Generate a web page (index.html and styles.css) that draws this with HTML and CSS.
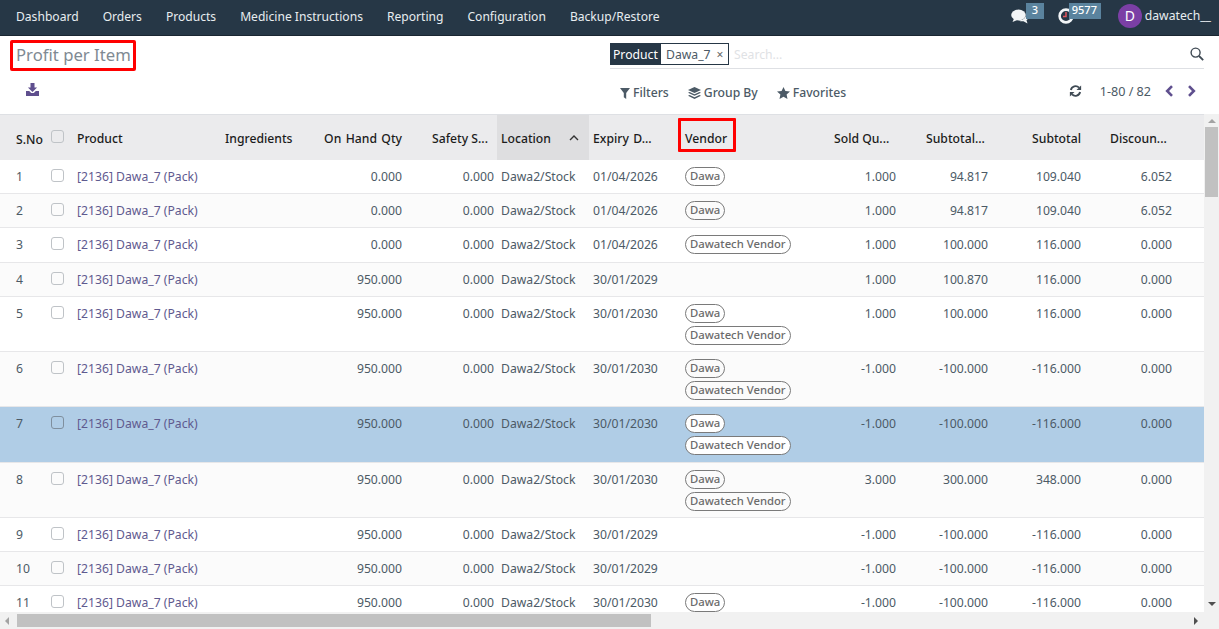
FILE: index.html
```html
<!DOCTYPE html>
<html lang="en">
<head>
<meta charset="utf-8">
<title>Profit per Item</title>
<link rel="stylesheet" href="styles.css">
</head>
<body>
<nav class="navbar">
  <ul class="menu">
    <li>Dashboard</li><li>Orders</li><li>Products</li><li>Medicine Instructions</li><li>Reporting</li><li>Configuration</li><li>Backup/Restore</li>
  </ul>
  <div class="systray">
    <div class="tray tray-chat">
      <svg class="tray-icon" width="18" height="15" viewBox="0 0 18 15"><ellipse cx="7.5" cy="6" rx="7.3" ry="5.4" fill="#f2f5f7"/><path d="M3 9.5 1.5 13 7 10.8Z" fill="#f2f5f7"/><path d="M15.2 3C17 4.5 18 6 17.6 8 17.3 9.5 16.5 10.5 15.5 11.2L16.5 14.5 12.5 12.3C10.5 12.5 8.8 12.1 7.6 11.4 12.5 11.5 16.4 8 15.2 3Z" fill="#f2f5f7"/></svg>
      <span class="count">3</span>
    </div>
    <div class="tray tray-clock">
      <svg class="tray-icon" width="16" height="16" viewBox="0 0 16 16"><circle cx="8" cy="8" r="6.4" fill="#263746" stroke="#f2f5f7" stroke-width="2.6"/><path d="M8 4v4.6H5" fill="none" stroke="#e0545c" stroke-width="1.5"/></svg>
      <span class="count">9577</span>
    </div>
    <div class="user"><span class="avatar">D</span><span class="username">dawatech__</span></div>
  </div>
</nav>

<section class="panel">
  <div class="panel-left">
    <h1 class="title">Profit per Item</h1>
    <button class="export" aria-label="Export">
      <svg width="13" height="13" viewBox="0 0 13 13"><path d="M4.5 0h4v4.5h2.6L6.5 9 1.9 4.5h2.6Z" fill="#5f4f8e"/><path d="M0 8h3.2l2 2h2.6l2-2H13v5H0Z" fill="#5f4f8e"/></svg>
    </button>
  </div>
  <div class="panel-right">
    <div class="searchbar">
      <div class="facet"><span class="facet-label">Product</span><span class="facet-value">Dawa_7<span class="facet-x">×</span></span></div>
      <span class="placeholder">Search...</span>
      <svg class="search-icon" width="14" height="14" viewBox="0 0 14 14"><circle cx="5.6" cy="5.6" r="4.5" fill="none" stroke="#3f4a54" stroke-width="1.4"/><path d="M9 9l4.2 4.2" stroke="#3f4a54" stroke-width="1.8"/></svg>
    </div>
    <div class="controls">
      <div class="filters">
        <span class="filter"><svg width="10" height="11" viewBox="0 0 10 11"><path d="M0 0h10L6.2 5v6L3.8 9.2V5Z" fill="#4c5a66"/></svg>Filters</span>
        <span class="filter"><svg width="13" height="13" viewBox="0 0 13 13"><path d="M6.5 0 13 3 6.5 6 0 3Z" fill="#4c5a66"/><path d="M1.6 5 6.5 7.3 11.4 5 13 5.8 6.5 8.8 0 5.8Z" fill="#4c5a66"/><path d="M1.6 8 6.5 10.3 11.4 8 13 8.8 6.5 12 0 8.8Z" fill="#4c5a66"/></svg>Group By</span>
        <span class="filter"><svg width="13" height="12" viewBox="0 0 13 12"><path d="M6.5 0 8.4 4 13 4.6 9.6 7.6 10.5 12 6.5 9.8 2.5 12 3.4 7.6 0 4.6 4.6 4Z" fill="#4c5a66"/></svg>Favorites</span>
      </div>
      <div class="pager">
        <svg class="refresh" width="13" height="12" viewBox="0 0 12 12"><path d="M1.4 5A4.8 4.8 0 0 1 9.5 2.6" fill="none" stroke="#3f4a54" stroke-width="1.9"/><path d="M11.6 0.4V5H7Z" fill="#3f4a54"/><path d="M10.6 7A4.8 4.8 0 0 1 2.5 9.4" fill="none" stroke="#3f4a54" stroke-width="1.9"/><path d="M.4 11.6V7H5Z" fill="#3f4a54"/></svg>
        <span class="pager-text">1-80 / 82</span>
        <svg class="arrow" width="9" height="12" viewBox="0 0 9 12"><path d="M7 1.2 2.2 6 7 10.8" fill="none" stroke="#5f4f8e" stroke-width="2.6"/></svg>
        <svg class="arrow" width="9" height="12" viewBox="0 0 9 12"><path d="M2 1.2 6.8 6 2 10.8" fill="none" stroke="#5f4f8e" stroke-width="2.6"/></svg>
      </div>
    </div>
  </div>
</section>

<div class="viewport">
  <div class="list-row">
    <div class="list-clip">
      <table class="list">
        <colgroup>
          <col class="c-no"><col class="c-check"><col class="c-product"><col class="c-num"><col class="c-num"><col class="c-num"><col class="c-num"><col class="c-num"><col class="c-vendor"><col class="c-num"><col class="c-num"><col class="c-sub"><col class="c-disc"><col class="c-rest">
        </colgroup>
        <thead>
          <tr>
            <th class="no">S.No</th>
            <th class="chk"><span class="checkbox"></span></th>
            <th>Product</th>
            <th>Ingredients</th>
            <th class="num">On Hand Qty</th>
            <th class="num"><span class="trunc">Safety S...</span></th>
            <th class="sorted">Location<svg class="sort" width="10" height="6" viewBox="0 0 10 6"><path d="M1 5 5 1l4 4" fill="none" stroke="#333" stroke-width="1.4"/></svg></th>
            <th>Expiry D...</th>
            <th class="vendor-head"><span class="marked">Vendor</span></th>
            <th class="num"><span class="trunc">Sold Qu...</span></th>
            <th class="num"><span class="trunc">Subtotal...</span></th>
            <th class="num">Subtotal</th>
            <th class="num"><span class="trunc">Discoun...</span></th>
            <th></th>
          </tr>
        </thead>
        <tbody>
          <tr class="h34"><td class="no">1</td><td class="chk"><span class="checkbox"></span></td><td><a>[2136] Dawa_7 (Pack)</a></td><td></td><td class="num">0.000</td><td class="num">0.000</td><td>Dawa2/Stock</td><td>01/04/2026</td><td class="tags"><span class="tag">Dawa</span></td><td class="num">1.000</td><td class="num">94.817</td><td class="num">109.040</td><td class="num">6.052</td><td></td></tr>
          <tr class="h34"><td class="no">2</td><td class="chk"><span class="checkbox"></span></td><td><a>[2136] Dawa_7 (Pack)</a></td><td></td><td class="num">0.000</td><td class="num">0.000</td><td>Dawa2/Stock</td><td>01/04/2026</td><td class="tags"><span class="tag">Dawa</span></td><td class="num">1.000</td><td class="num">94.817</td><td class="num">109.040</td><td class="num">6.052</td><td></td></tr>
          <tr class="h35"><td class="no">3</td><td class="chk"><span class="checkbox"></span></td><td><a>[2136] Dawa_7 (Pack)</a></td><td></td><td class="num">0.000</td><td class="num">0.000</td><td>Dawa2/Stock</td><td>01/04/2026</td><td class="tags"><span class="tag">Dawatech Vendor</span></td><td class="num">1.000</td><td class="num">100.000</td><td class="num">116.000</td><td class="num">0.000</td><td></td></tr>
          <tr class="h34"><td class="no">4</td><td class="chk"><span class="checkbox"></span></td><td><a>[2136] Dawa_7 (Pack)</a></td><td></td><td class="num">950.000</td><td class="num">0.000</td><td>Dawa2/Stock</td><td>30/01/2029</td><td class="tags"></td><td class="num">1.000</td><td class="num">100.870</td><td class="num">116.000</td><td class="num">0.000</td><td></td></tr>
          <tr class="h55"><td class="no">5</td><td class="chk"><span class="checkbox"></span></td><td><a>[2136] Dawa_7 (Pack)</a></td><td></td><td class="num">950.000</td><td class="num">0.000</td><td>Dawa2/Stock</td><td>30/01/2030</td><td class="tags"><span class="tag">Dawa</span><span class="tag">Dawatech Vendor</span></td><td class="num">1.000</td><td class="num">100.000</td><td class="num">116.000</td><td class="num">0.000</td><td></td></tr>
          <tr class="h55"><td class="no">6</td><td class="chk"><span class="checkbox"></span></td><td><a>[2136] Dawa_7 (Pack)</a></td><td></td><td class="num">950.000</td><td class="num">0.000</td><td>Dawa2/Stock</td><td>30/01/2030</td><td class="tags"><span class="tag">Dawa</span><span class="tag">Dawatech Vendor</span></td><td class="num">-1.000</td><td class="num">-100.000</td><td class="num">-116.000</td><td class="num">0.000</td><td></td></tr>
          <tr class="h56 selected"><td class="no">7</td><td class="chk"><span class="checkbox"></span></td><td><a>[2136] Dawa_7 (Pack)</a></td><td></td><td class="num">950.000</td><td class="num">0.000</td><td>Dawa2/Stock</td><td>30/01/2030</td><td class="tags"><span class="tag">Dawa</span><span class="tag">Dawatech Vendor</span></td><td class="num">-1.000</td><td class="num">-100.000</td><td class="num">-116.000</td><td class="num">0.000</td><td></td></tr>
          <tr class="h55"><td class="no">8</td><td class="chk"><span class="checkbox"></span></td><td><a>[2136] Dawa_7 (Pack)</a></td><td></td><td class="num">950.000</td><td class="num">0.000</td><td>Dawa2/Stock</td><td>30/01/2030</td><td class="tags"><span class="tag">Dawa</span><span class="tag">Dawatech Vendor</span></td><td class="num">3.000</td><td class="num">300.000</td><td class="num">348.000</td><td class="num">0.000</td><td></td></tr>
          <tr class="h34"><td class="no">9</td><td class="chk"><span class="checkbox"></span></td><td><a>[2136] Dawa_7 (Pack)</a></td><td></td><td class="num">950.000</td><td class="num">0.000</td><td>Dawa2/Stock</td><td>30/01/2029</td><td class="tags"></td><td class="num">-1.000</td><td class="num">-100.000</td><td class="num">-116.000</td><td class="num">0.000</td><td></td></tr>
          <tr class="h34"><td class="no">10</td><td class="chk"><span class="checkbox"></span></td><td><a>[2136] Dawa_7 (Pack)</a></td><td></td><td class="num">950.000</td><td class="num">0.000</td><td>Dawa2/Stock</td><td>30/01/2029</td><td class="tags"></td><td class="num">-1.000</td><td class="num">-100.000</td><td class="num">-116.000</td><td class="num">0.000</td><td></td></tr>
          <tr class="h34"><td class="no">11</td><td class="chk"><span class="checkbox"></span></td><td><a>[2136] Dawa_7 (Pack)</a></td><td></td><td class="num">950.000</td><td class="num">0.000</td><td>Dawa2/Stock</td><td>30/01/2030</td><td class="tags"><span class="tag">Dawa</span></td><td class="num">-1.000</td><td class="num">-100.000</td><td class="num">-116.000</td><td class="num">0.000</td><td></td></tr>
        </tbody>
      </table>
    </div>
    <div class="vbar">
      <span class="tri tri-up"></span>
      <div class="vtrack"><div class="vthumb"></div></div>
      <span class="tri tri-down"></span>
    </div>
  </div>
  <div class="hbar">
    <span class="tri tri-left"></span>
    <div class="htrack"><div class="hthumb"></div></div>
    <span class="tri tri-right"></span>
  </div>
</div>
</body>
</html>
```
FILE: styles.css
```css
*, *::before { box-sizing: border-box; }
html, body { height: 100%; }
body {
  margin: 0;
  display: flex;
  flex-direction: column;
  overflow: hidden;
  background: #fff;
  color: #4c5a66;
  font: 12.2px/18px "Noto Sans", sans-serif;
}

/* Navbar */
.navbar {
  flex: 0 0 36px;
  display: flex;
  justify-content: space-between;
  background: #263746;
  border-bottom: 1px solid #1a2631;
  color: #e8edf0;
}
.menu {
  display: flex;
  gap: 24px;
  margin: 0;
  padding: 8px 0 0 16px;
  font-size: 12.1px;
  list-style: none;
}
.systray { display: flex; align-items: flex-start; padding-right: 8px; }
.tray { position: relative; display: flex; }
.tray-chat { width: 47px; padding-top: 9px; }
.tray-clock { width: 60px; padding-top: 8px; }
.count {
  position: absolute;
  top: 3px;
  height: 16px;
  padding: 0 6px;
  background: #5a839e;
  color: #fff;
  font-size: 11px;
  font-weight: 500;
  line-height: 14px;
}
.tray-chat .count { left: 15px; }
.tray-clock .count { left: 11px; padding: 0 3px; width: 32px; }
.user { display: flex; gap: 3px; padding-top: 4px; }
.avatar {
  width: 24px;
  height: 24px;
  border-radius: 50%;
  background: #7b3fa5;
  color: #fff;
  font-size: 14px;
  line-height: 24px;
  text-align: center;
}
.username { font-size: 12.2px; line-height: 24px; }

/* Control panel */
.panel {
  flex: 0 0 78px;
  display: flex;
  justify-content: space-between;
}
.panel-left { padding-left: 10px; }
.title {
  width: 126px;
  height: 31px;
  margin: 4px 0 0;
  padding: 0 3px;
  border: 3px solid #f00;
  border-radius: 2px;
  color: #7f8a93;
  font-size: 16.7px;
  font-weight: 400;
  line-height: 23px;
  white-space: nowrap;
}
.export {
  display: block;
  margin: 12px 0 0 16px;
  padding: 0;
  border: 0;
  background: none;
  line-height: 0;
}
.panel-right { width: 594px; margin-right: 15px; padding-top: 7px; }
.searchbar {
  display: flex;
  align-items: center;
  height: 26px;
  padding-bottom: 3px;
  border-bottom: 1px solid #dee0e4;
}
.facet { display: flex; height: 22px; }
.facet-label {
  padding: 1px 3px 0;
  width: 51px;
  background: #263746;
  color: #fff;
  line-height: 21px;
}
.facet-value {
  display: flex;
  gap: 6px;
  width: 68px;
  padding: 1px 5px 0;
  border: 1px solid #263746;
  border-left: 0;
  line-height: 19px;
}
.facet-x { color: #666; font-size: 12px; }
.placeholder { margin: 2px 0 0 5px; color: #dfe2e5; }
.search-icon { margin-left: auto; }
.controls {
  display: flex;
  justify-content: space-between;
  padding: 14px 0 0 10px;
}
.filters { display: flex; gap: 19px; margin-top: 1px; }
.filter {
  display: flex;
  align-items: center;
  gap: 3px;
  font-weight: 500;
  height: 18px;
}
.pager { display: flex; align-items: center; height: 16px; padding-right: 8px; }
.refresh { margin-right: 18px; }
.pager-text { margin-right: 14px; padding-top: 2px; font-size: 12.6px; }
.arrow { margin-right: 13px; }
.arrow:last-child { margin-right: 0; }

/* Table viewport */
.viewport { flex: 1 1 0; display: flex; flex-direction: column; min-height: 0; }
.list-row { flex: 1 1 0; display: flex; min-height: 0; }
.list-clip { flex: 1 1 0; overflow: hidden; min-width: 0; }
.list {
  width: 2227px;
  table-layout: fixed;
  border-collapse: separate;
  border-spacing: 0;
}
.c-no { width: 47px; }
.c-check { width: 26px; }
.c-product { width: 148px; }
.c-num { width: 92px; }
.c-vendor { width: 126px; }
.c-sub { width: 93px; }
.c-disc { width: 91px; }
.list th, .list td {
  padding: 8px 3px 0 4px;
  border-bottom: 1px solid #e7e7e9;
  vertical-align: top;
  white-space: nowrap;
  overflow: hidden;
}
.list th {
  height: 46px;
  padding-top: 15px;
  background: #ebebed;
  border-top: 1px solid #dee0e4;
  border-bottom: 0;
  color: #1c1c1c;
  font-weight: 500;
  word-spacing: 1.2px;
  text-align: left;
}
.trunc { display: inline-block; width: 62px; text-align: left; word-spacing: 0; }
.list .num { text-align: right; }
.list .no { padding-left: 16px; padding-right: 0; }
.list .chk { padding-left: 4px; padding-right: 0; }
.list th.no { padding-top: 16px; }
.list th.chk { padding-top: 15px; }
.list th.sorted { position: relative; background: #dedee0; }
.sort { position: absolute; top: 20px; right: 10px; }
.list td { color: #4c5a66; }
.h34 { height: 34px; }
.h35 { height: 35px; }
.h55 { height: 55px; }
.h56 { height: 56px; }
tbody tr:nth-child(even) { background: #fbfbfb; }
tbody .selected,
tbody .selected:nth-child(odd) { background: #b0cde6; }
.list a { color: #5f5a8f; }
.checkbox {
  display: block;
  width: 13px;
  height: 13px;
  background: transparent;
  border: 1px solid #bfc3c7;
  border-radius: 3px;
}
.selected .checkbox { border-color: #7f8f9e; }
.list td.chk { padding-top: 9px; }
.list th.vendor-head { position: relative; overflow: visible; }
.marked::before {
  content: "";
  position: absolute;
  left: -3px;
  top: 3px;
  width: 58px;
  height: 34px;
  border: 3px solid #f00;
  border-radius: 1px;
}
.list td.tags { padding-top: 7px; }
.tag {
  display: block;
  width: fit-content;
  height: 19px;
  margin-bottom: 3px;
  padding: 0 4px;
  border: 1px solid #7a7a7a;
  border-radius: 10px;
  font-size: 11.3px;
  font-weight: 500;
  line-height: 16px;
  color: #6b6b6b;
}
.selected .tag { background: #fff; }

/* Fake scrollbars */
.vbar {
  flex: 0 0 15px;
  display: flex;
  flex-direction: column;
  align-items: center;
  background: #f1f1f1;
}
.vtrack { flex: 1 1 0; width: 100%; padding: 4px 1px 0 1px; }
.vthumb { height: 70px; background: #c1c1c1; }
.hbar {
  flex: 0 0 17px;
  display: flex;
  align-items: center;
  background: #f1f1f1;
  padding: 0 21px 0 5px;
}
.htrack { flex: 1 1 0; height: 13px; padding-left: 8px; }
.hthumb { width: 634px; height: 100%; background: #c1c1c1; }
.tri { flex: none; width: 0; height: 0; border: 4px solid transparent; }
.tri-up { margin-top: 5px; border-top: 0; border-bottom-color: #a3a3a3; }
.tri-down { margin-bottom: 6px; border-bottom: 0; border-top-color: #505050; }
.tri-left { border-left: 0; border-right-color: #a3a3a3; }
.tri-right { border-right: 0; border-left-color: #505050; }
```
